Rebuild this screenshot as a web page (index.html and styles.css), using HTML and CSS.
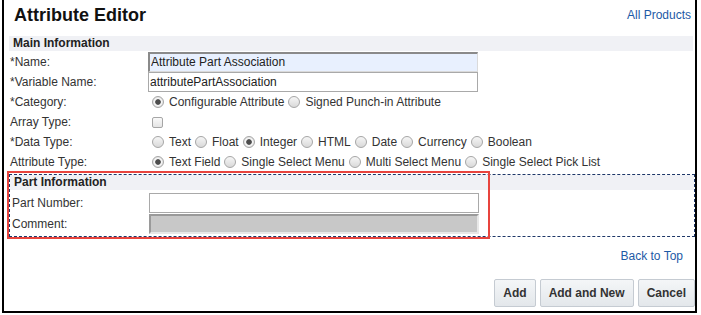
FILE: index.html
```html
<!DOCTYPE html>
<html>
<head>
<meta charset="UTF-8">
<title>Attribute Editor</title>
<link rel="stylesheet" href="styles.css">
</head>
<body>
<div class="frame">
  <div class="top">
    <h1>Attribute Editor</h1>
    <a class="link" href="#">All Products</a>
  </div>

  <div class="bar">Main Information</div>
  <div class="form">
    <div class="lbl">*Name:</div>
    <div class="val"><input class="txt focus" type="text" value="Attribute Part Association"></div>

    <div class="lbl">*Variable Name:</div>
    <div class="val"><input class="txt" type="text" value="attributePartAssociation"></div>

    <div class="lbl">*Category:</div>
    <div class="val">
      <label class="opt"><input type="radio" name="cat" checked>Configurable Attribute</label>
      <label class="opt"><input type="radio" name="cat">Signed Punch-in Attribute</label>
    </div>

    <div class="lbl">Array Type:</div>
    <div class="val"><label class="opt"><input type="checkbox"></label></div>

    <div class="lbl">*Data Type:</div>
    <div class="val">
      <label class="opt"><input type="radio" name="dt">Text</label>
      <label class="opt"><input type="radio" name="dt">Float</label>
      <label class="opt"><input type="radio" name="dt" checked>Integer</label>
      <label class="opt"><input type="radio" name="dt">HTML</label>
      <label class="opt"><input type="radio" name="dt">Date</label>
      <label class="opt"><input type="radio" name="dt">Currency</label>
      <label class="opt"><input type="radio" name="dt">Boolean</label>
    </div>

    <div class="lbl">Attribute Type:</div>
    <div class="val">
      <label class="opt"><input type="radio" name="at" checked>Text Field</label>
      <label class="opt"><input type="radio" name="at">Single Select Menu</label>
      <label class="opt"><input type="radio" name="at">Multi Select Menu</label>
      <label class="opt"><input type="radio" name="at">Single Select Pick List</label>
    </div>
  </div>

  <div class="part">
    <div class="highlight"></div>
    <div class="bar part-bar">Part Information</div>
    <div class="part-form">
      <div class="lbl">Part Number:</div>
      <div class="val"><input class="txt" type="text"></div>
      <div class="lbl">Comment:</div>
      <div class="val"><input class="txt off" type="text" disabled></div>
    </div>
  </div>

  <div class="back"><a class="link" href="#">Back to Top</a></div>

  <div class="actions">
    <button>Add</button>
    <button>Add and New</button>
    <button>Cancel</button>
  </div>
</div>
</body>
</html>
```

FILE: styles.css
```css
* {
  box-sizing: border-box;
}

body {
  margin: 0;
  background: #fff;
  font-family: "Liberation Sans", Arial, sans-serif;
  font-size: 12px;
  color: #333;
}

.frame {
  position: relative;
  width: 695px;
  margin-left: 2px;
  border: 2px solid #000;
  border-top: none;
  padding-bottom: 4px;
}

.top {
  display: flex;
  justify-content: space-between;
  align-items: flex-start;
  padding: 0 4px 0 10px;
}

.top h1 {
  margin: 0;
  padding-top: 4px;
  font-size: 18px;
  line-height: 22px;
  color: #111;
}

.top .link {
  padding-top: 8px;
}

.link {
  color: #1d5aa6;
  text-decoration: none;
  line-height: 14px;
}

.bar {
  margin: 10px 2px 0 5px;
  height: 15px;
  line-height: 15px;
  padding-left: 4px;
  background: #f0f1f5;
  font-weight: bold;
  color: #222;
}

.form {
  display: grid;
  grid-template-columns: 138px 1fr;
  grid-template-rows: 21px repeat(5, 20px);
  padding-left: 6px;
}

.lbl {
  display: flex;
  align-items: center;
  line-height: 14px;
}

.val {
  display: flex;
  align-items: center;
  padding-left: 2px;
  line-height: 14px;
}

.txt {
  width: 330px;
  height: 20px;
  margin: 0;
  padding: 0 2px 0 1px;
  border: 1px solid #a9a9a9;
  font-family: inherit;
  font-size: 12px;
  color: #222;
  background: #fff;
  outline: none;
}

.form .val .txt {
  margin-left: -2px;
}

.txt.focus {
  background: #e8f0fe;
  border-color: #8a8a8a #dadada #dadada #8a8a8a;
  border-width: 2px 1px 1px 2px;
}

.txt.off {
  background: #c8c8c8;
  border-color: #9a9a9a #e8e8e8 #e8e8e8 #9a9a9a;
  border-width: 2px;
}

.opt {
  display: inline-flex;
  align-items: center;
  margin-right: 2px;
  white-space: nowrap;
}

.opt input {
  appearance: none;
  -webkit-appearance: none;
  width: 12px;
  height: 12px;
  margin: 0 5px 0 2px;
  border: 1px solid #a6a6a6;
  background: linear-gradient(#f6f6f6, #d9d9d9);
}

.opt input[type="radio"] {
  border-radius: 50%;
}

.opt input[type="radio"]:checked {
  background: radial-gradient(circle, #4d4d4d 0, #4d4d4d 2.4px, #fafafa 3.2px, #e2e2e2 5px);
}

.opt input[type="checkbox"] {
  border-radius: 2px;
  width: 11px;
  height: 11px;
  margin-left: 2px;
  background: linear-gradient(#fafafa, #e4e4e4);
}

.part {
  position: relative;
  margin: 2px 0 0 5px;
  border: 1px dashed #1e3768;
  padding-bottom: 2px;
}

.part-bar {
  margin: 0;
  height: 15px;
}

.part-form {
  display: grid;
  grid-template-columns: 137px 1fr;
  grid-auto-rows: 20px;
  row-gap: 1px;
  padding: 3px 0 0 2px;
}

.part-form .val {
  padding-left: 0;
}

.highlight {
  position: absolute;
  left: -3px;
  top: -4px;
  width: 483px;
  height: 68px;
  border: 2px solid #e8443d;
  pointer-events: none;
}

.back {
  margin-top: 12px;
  text-align: right;
  padding-right: 12px;
  height: 14px;
}

.actions {
  display: flex;
  justify-content: flex-end;
  gap: 4px;
  margin-top: 16px;
}

.actions button {
  height: 28px;
  padding: 0 8px;
  border: 1px solid #c5cbd2;
  border-radius: 2px;
  background: linear-gradient(#f4f6f8, #e3e7eb);
  font-family: inherit;
  font-size: 12px;
  font-weight: bold;
  color: #333;
  cursor: pointer;
}
```
